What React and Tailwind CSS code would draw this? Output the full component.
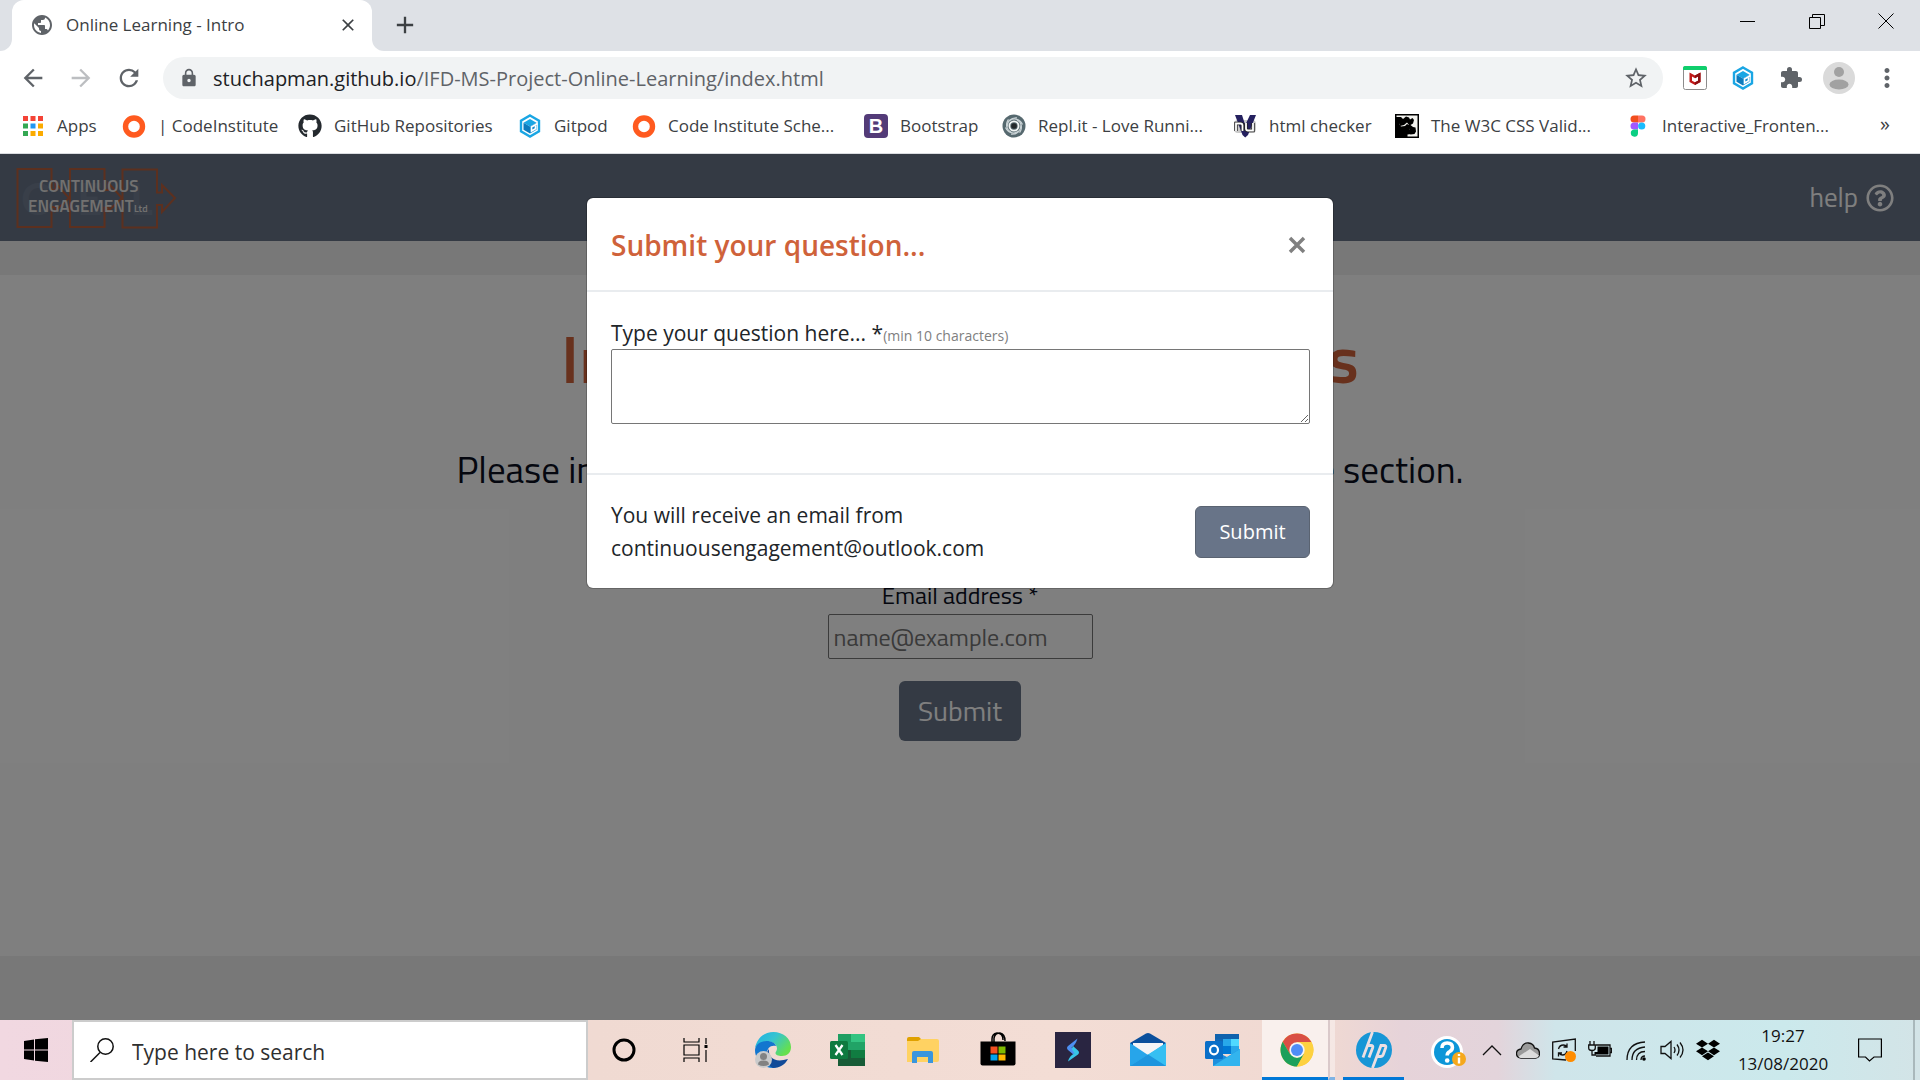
import React from "react";
import {
  MdLock,
  MdExtension,
  MdStarBorder,
  MdMoreVert,
  MdArrowBack,
  MdArrowForward,
  MdRefresh,
  MdPublic,
  MdClose,
  MdAdd,
} from "react-icons/md";
import { FaGithub, FaRegQuestionCircle, FaDropbox } from "react-icons/fa";

/* ---------- browser icons ---------- */

function AppsIcon() {
  const colors = ["#f44336", "#f44336", "#f44336", "#34a853", "#2196f3", "#fbab00", "#34a853", "#fbab00", "#fbab00"];
  return (
    <svg viewBox="0 0 24 24" className="h-6 w-6 shrink-0">
      {colors.map((c, i) => (
        <rect key={i} x={2 + (i % 3) * 7.5} y={2 + Math.floor(i / 3) * 7.5} width="5" height="5" fill={c} />
      ))}
    </svg>
  );
}

function RingIcon() {
  return (
    <svg viewBox="0 0 24 24" className="h-6 w-6 shrink-0">
      <circle cx="12" cy="12.5" r="8.5" fill="none" stroke="#ff5a1f" strokeWidth="5.4" />
    </svg>
  );
}

function GitpodIcon() {
  return (
    <svg viewBox="0 0 24 24" className="h-6 w-6 shrink-0">
      <path d="M12 1.500l9 5.200v10.600l-9 5.200-9-5.200V6.700z" fill="none" stroke="#1aa6e4" strokeWidth="2.400" />
      <path d="M12 5l6.500 3.700L12 12.400 5.500 8.700z" fill="#1aa6e4" />
      <path d="M5.500 8.700L12 12.400v7L5.500 15.700z" fill="#0d7bbd" />
      <path d="M12 12.400l6.500-3.700v7L12 19.400z" fill="#1288cb" />
      <path d="M19.500 9.500L13.500 13v4l4-2.300v-3" fill="none" stroke="#fff" strokeWidth="1.600" />
    </svg>
  );
}

function BootstrapIcon() {
  return (
    <span className="flex h-6 w-6 shrink-0 items-center justify-center rounded bg-[#533b78] font-['Liberation_Sans',sans-serif] text-xl leading-none font-bold text-white">
      B
    </span>
  );
}

function SwirlIcon() {
  return (
    <svg viewBox="0 0 24 24" className="h-6 w-6 shrink-0">
      <circle cx="12" cy="12" r="11.500" fill="#56696f" />
      <g fill="none" stroke="#c9d2d5" strokeWidth="1.200">
        {[0, 60, 120, 180, 240, 300].map((a) => (
          <path key={a} d="M8 6.500c4-3 10-1.500 12.500 4" transform={`rotate(${a} 12 12)`} />
        ))}
      </g>
      <circle cx="12" cy="12" r="4.600" fill="#56696f" stroke="#f2f5f5" strokeWidth="1.800" />
      <circle cx="12" cy="12" r="2.800" fill="#24292b" />
    </svg>
  );
}

function NuIcon() {
  return (
    <svg viewBox="0 0 24 24" className="h-6 w-6 shrink-0">
      <rect x="1" y="6" width="22" height="13" rx="4" fill="#777" opacity="0.4" />
      <path d="M2 1h7l3.200 10L17 1h6l-8 20-2.800 2.500L9.500 21z" fill="#25215f" />
      <path d="M3 17V9.500h4.500q2 0 2 2V17M13 9v5.500q0 2 2 2h5V9" fill="none" stroke="#222" strokeWidth="3.400" />
      <path d="M3 17V9.500h4.500q2 0 2 2V17M13 9v5.500q0 2 2 2h5V9" fill="none" stroke="#fff" strokeWidth="1.800" />
    </svg>
  );
}

function W3cIcon() {
  return (
    <svg viewBox="0 0 24 24" className="h-6 w-6 shrink-0">
      <rect width="24" height="24" fill="#000" />
      <path d="M1.500 1.500h21v21H12.500v-2l4-.5V16l-2.500-1 1-3.500-3-1.500-2 2-4 .5-1.500-2 1-3.500L1.500 6z" fill="#f3f3ef" />
      <path d="M1 3h5l2 2 3-2.500 3 1 1 2 2.500-1.500 1.500 2-1 3.500-2.500 1.500 2.500 2 2.500.5.500 4-1.500 2.500-4 .500-1.500-2 1.500-2-2.500-3 1-2.500-2-2.500-3 2.500-4 1-1-3.500-3-.5z" fill="#000" />
    </svg>
  );
}

function FigmaIcon() {
  return (
    <svg viewBox="0 0 24 24" className="h-6 w-6 shrink-0">
      <path d="M8 1.500h4v7H8a3.500 3.500 0 010-7z" fill="#f24e1e" />
      <path d="M12 1.500h4a3.500 3.500 0 010 7h-4z" fill="#ff7262" />
      <path d="M8 8.500h4v7H8a3.500 3.500 0 010-7z" fill="#a259ff" />
      <circle cx="15.700" cy="12" r="3.600" fill="#1abcfe" />
      <path d="M8 15.500h4V19a3.600 3.600 0 11-4-3.500z" fill="#0acf83" />
    </svg>
  );
}

function McAfeeIcon() {
  return (
    <svg viewBox="0 0 24 24" className="h-6 w-6">
      <rect x=".5" y=".5" width="23" height="23" rx="2" fill="#fff" stroke="#8c8c8c" />
      <path d="M0 4V2q0-2 2-2h20q2 0 2 2v2z" fill="#0fce6c" />
      <path d="M6.500 6.500l5.500 3 5.500-3V16L12 19l-5.500-3zM9 10.500v4.200l3 1.600 3-1.600v-4.200L12 12.300z" fill="#c01818" fillRule="evenodd" />
      <path d="M12 9.500l5.500-3V16L12 19v-2.700l3-1.600v-4.200l-3 1.800z" fill="#8c0f12" />
    </svg>
  );
}

const bookmarks = [
  { label: "Apps", icon: <AppsIcon />, width: "w-[101px]" },
  { label: "| CodeInstitute", icon: <RingIcon />, width: "w-[176px]" },
  { label: "GitHub Repositories", icon: <FaGithub className="h-6 w-6 shrink-0 text-[#24292e]" />, width: "w-[220px]" },
  { label: "Gitpod", icon: <GitpodIcon />, width: "w-[114px]" },
  { label: "Code Institute Sche...", icon: <RingIcon />, width: "w-[232px]" },
  { label: "Bootstrap", icon: <BootstrapIcon />, width: "w-[138px]" },
  { label: "Repl.it - Love Runni...", icon: <SwirlIcon />, width: "w-[231px]" },
  { label: "html checker", icon: <NuIcon />, width: "w-[162px]" },
  { label: "The W3C CSS Valid...", icon: <W3cIcon />, width: "w-[231px]" },
  { label: "Interactive_Fronten...", icon: <FigmaIcon />, width: "w-[220px]" },
];

function Browser() {
  return (
    <header className="border-b border-[#dadce0] bg-white text-[#3c4043]">
      <div className="flex h-[51px] bg-[#dee1e6]">
        <div className="w-3 bg-white">
          <div className="h-full rounded-br-xl bg-[#dee1e6]" />
        </div>
        <div className="flex w-[360px] items-center rounded-t-xl bg-white pr-3 pb-0.5 pl-[18px]">
          <MdPublic className="h-6 w-6 text-[#5f6368]" />
          <span className="ml-3 flex-1 text-[17px]">Online Learning - Intro</span>
          <button aria-label="Close tab">
            <MdClose className="h-5 w-6" />
          </button>
        </div>
        <div className="w-3 bg-white">
          <div className="h-full rounded-bl-xl bg-[#dee1e6]" />
        </div>
        <button aria-label="New tab" className="ml-[7px] pb-0.5">
          <MdAdd className="h-7 w-7" />
        </button>
        <div className="ml-auto flex h-[42px] items-center text-black">
          <button aria-label="Minimise" className="flex w-[69px] justify-center">
            <svg viewBox="0 0 16 16" className="h-4 w-4"><path d="M0 8.500h15" stroke="currentColor" /></svg>
          </button>
          <button aria-label="Restore" className="flex w-[69px] justify-center">
            <svg viewBox="0 0 16 16" className="h-4 w-4" fill="none" stroke="currentColor">
              <path d="M.5 4.500h11v11H.5zM3.500 4.500v-3h12v11h-4" />
            </svg>
          </button>
          <button aria-label="Close" className="flex w-[69px] justify-center">
            <svg viewBox="0 0 16 16" className="h-4 w-4"><path d="M.5.5l15 15M15.500.5l-15 15" stroke="currentColor" /></svg>
          </button>
        </div>
      </div>

      <div className="flex h-[54px] items-center pr-[18px] pl-[19px] text-[#5f6368]">
        <button aria-label="Back"><MdArrowBack className="h-7 w-7" /></button>
        <button aria-label="Forward" className="ml-5"><MdArrowForward className="h-7 w-7 text-[#bcbec1]" /></button>
        <button aria-label="Reload" className="ml-5"><MdRefresh className="h-7 w-7" /></button>
        <div className="ml-5 flex h-[42px] flex-1 items-center rounded-full bg-[#f1f3f4] pr-[14px] pl-4">
          <MdLock className="h-5 w-5" />
          <span className="ml-[14px] flex-1 pt-0.5 text-xl">
            <span className="text-[#202124]">stuchapman.github.io</span>/IFD-MS-Project-Online-Learning/index.html
          </span>
          <button aria-label="Bookmark this page"><MdStarBorder className="h-[26px] w-[26px]" /></button>
        </div>
        <div className="ml-5 flex items-center gap-6">
          <McAfeeIcon />
          <GitpodIcon />
          <MdExtension className="h-6 w-6" />
        </div>
        <svg viewBox="0 0 32 32" className="ml-5 h-8 w-8">
          <circle cx="16" cy="16" r="16" fill="#dadada" />
          <circle cx="16" cy="10" r="5" fill="#a1a1a1" />
          <ellipse cx="16" cy="22.500" rx="9.500" ry="5" fill="#a1a1a1" />
        </svg>
        <button aria-label="Menu" className="ml-[17px]"><MdMoreVert className="h-[30px] w-[30px]" /></button>
      </div>

      <nav className="flex h-12 items-start pt-[9px] pl-[21px] text-[17px] leading-6">
        {bookmarks.map((b) => (
          <a key={b.label} href="#" className={`flex shrink-0 items-center gap-3 whitespace-nowrap ${b.width}`}>
            {b.icon}
            {b.label}
          </a>
        ))}
        <button aria-label="More bookmarks" className="mr-[30px] ml-auto text-xl leading-5">»</button>
      </nav>
    </header>
  );
}

/* ---------- web page ---------- */

function SiteLogo() {
  return (
    <svg viewBox="0 0 200 86" className="h-[86px] w-[200px]" role="img" aria-label="Continuous Engagement Ltd">
      <g fill="#727e92" fontFamily="Lato, sans-serif" fontSize="44" fontWeight="700">
        <text x="21" y="60">C</text>
        <text x="77" y="60">E</text>
        <text x="130" y="60">L</text>
      </g>
      <g fill="none" stroke="#b8603f" strokeWidth="2">
        <path d="M51.500 35V14H17.500v58h34V52M51.500 35h4V28L69 43 55.500 56v-4h-4" />
        <path d="M104.500 35V14H70v58h34.500V52M104.500 35h4V28L122 43l-13.500 13v-4h-4" />
        <path d="M157 37.500V14.500h-34.500V72.500H157V50h5v7l13-14-13-13v7.500z" />
      </g>
      <g fill="#e4e2e0" fontFamily="'Titillium Web', 'Open Sans', sans-serif" fontWeight="600">
        <text x="39" y="37" fontSize="17">CONTINUOUS</text>
        <text x="28" y="57" fontSize="17">ENGAGEMENT</text>
        <text x="134" y="57" fontSize="10">Ltd</text>
      </g>
    </svg>
  );
}

function Page() {
  return (
    <div className="flex flex-1 flex-col bg-[#f0f0f0] font-['Titillium_Web','Open_Sans',sans-serif]">
      <div className="flex h-[87px] items-center justify-between bg-[#687488] pr-[26px]">
        <SiteLogo />
        <a href="#" className="flex items-center gap-2 text-[27px] text-white">
          help <FaRegQuestionCircle className="h-7 w-7" />
        </a>
      </div>
      <section className="mt-[34px] mb-16 flex flex-1 flex-col items-center bg-white pt-[43px] text-[#0a0f1e]">
        <h1 className="text-[67px] leading-[80px] font-semibold whitespace-nowrap text-[#d0623a]">Introduction to the Modules</h1>
        <p className="mt-[43px] text-[37px] leading-[56px] whitespace-nowrap">Please input your name and an email address to take the section.</p>
        <form className="mt-20 flex flex-col items-center" onSubmit={(e) => e.preventDefault()}>
          <label htmlFor="email" className="mb-px text-2xl leading-9">Email address *</label>
          <input
            id="email"
            type="email"
            placeholder="name@example.com"
            className="h-[45px] w-[265px] rounded-xs border border-[#767676] px-[5px] text-2xl placeholder:text-[#757575]"
          />
          <button className="mt-[22px] h-[60px] rounded-md bg-[#687488] px-[19px] text-[28px] leading-none text-white">Submit</button>
        </form>
      </section>
    </div>
  );
}

function QuestionModal() {
  return (
    <div className="absolute inset-0 flex items-start justify-center bg-black/50 pt-[43px]">
      <div role="dialog" aria-labelledby="dialog-title" className="w-full max-w-[748px] rounded-[7px] border border-black/20 bg-white bg-clip-padding text-[21px] text-[#212529]">
        <div className="flex h-[94px] items-center justify-between border-b-2 border-[#e9ecef] pt-0.5 pr-6 pl-6">
          <h2 id="dialog-title" className="text-[28px] font-semibold text-[#cf623a]">Submit your question...</h2>
          <button aria-label="Close" className="text-[#808080]">
            <svg viewBox="0 0 24 24" className="h-6 w-6"><path d="M5 5l14 14M19 5L5 19" stroke="currentColor" strokeWidth="3.500" /></svg>
          </button>
        </div>
        <div className="border-b-2 border-[#e9ecef] pt-[25px] pr-[23px] pb-[49px] pl-6">
          <label htmlFor="question" className="block leading-8">
            Type your question here... *<span className="text-sm text-[#808080]">(min 10 characters)</span>
          </label>
          <textarea id="question" className="block h-[75px] w-full rounded-xs border border-[#767676]" />
        </div>
        <div className="flex items-center justify-between pt-6 pr-[23px] pb-[23px] pl-6">
          <p className="leading-[33px]">
            You will receive an email from
            <br />
            continuousengagement@outlook.com
          </p>
          <button className="h-[52px] w-[115px] rounded-md border border-[#5a6371] bg-[#687488] text-xl text-white">Submit</button>
        </div>
      </div>
    </div>
  );
}

/* ---------- taskbar ---------- */

function StartIcon() {
  return (
    <svg viewBox="0 0 24 24" className="h-6 w-6">
      <path d="M0 3l10-1.500v10H0zM11 1.300L24 0v11.500H11zM0 12.500h10v10L0 21zM11 12.500h13V24l-13-1.300z" fill="#000" />
    </svg>
  );
}

function TaskViewIcon() {
  return (
    <svg viewBox="0 0 26 24" className="h-6 w-[26px]" fill="none" stroke="#000" strokeWidth="1.200">
      <path d="M1 0v4h15V0M1 7h15v10H1zM1 24v-4h15v4M23 0v6M23 12v12" />
      <path d="M21.500 7h3v3h-3z" fill="#000" stroke="none" />
    </svg>
  );
}

function EdgeIcon() {
  return (
    <svg viewBox="0 0 36 36" className="h-9 w-9">
      <defs>
        <linearGradient id="edgeTop" x1="0" y1="0" x2="1" y2="0.600">
          <stop offset="0" stopColor="#1fb0e6" />
          <stop offset="0.500" stopColor="#35c4d0" />
          <stop offset="1" stopColor="#66e04c" />
        </linearGradient>
      </defs>
      <path d="M0 16C2 6 9 0 18.500 0 28 0 36 6.500 36 15c0 6-4 9-9 9-4 0-6.500-1-6.500-3 0-1.500 1.500-2 1.500-4.500 0-4-4-7-9-7C7 9.500 2.500 12 0 16z" fill="url(#edgeTop)" />
      <path d="M0 18C.5 12 6 9 11.500 9c5.500 0 9 2.500 9.500 5-5-1.500-9 2-9 7 0 8 8 12 15 10-4 4-7 5-9 5C8 36 0 28 0 18z" fill="#1276cf" />
      <path d="M14 17c-1 9 6 14 19 10-3 6-9 9-15 9-7-3-9-13-4-19z" fill="#114a98" />
      <circle cx="8.500" cy="27.500" r="8.500" fill="#c9cacb" />
      <circle cx="8.500" cy="24.500" r="3.500" fill="#828282" />
      <path d="M3 32.500q0-4 5.500-4t5.500 4q-5.500 3-11 0z" fill="#828282" />
    </svg>
  );
}

function ExcelIcon() {
  return (
    <svg viewBox="0 0 36 36" className="h-9 w-9">
      <path d="M8 2h27v32H8z" fill="#21a366" />
      <path d="M8 2h14v8H8z" fill="#1f9e62" />
      <path d="M21 2h14v8H21z" fill="#33c481" />
      <path d="M8 18h27v8H8z" fill="#107c41" />
      <path d="M8 26h27v8H8z" fill="#185c37" />
      <path d="M8 18h13v8H8z" fill="#185c37" />
      <rect x="0" y="9" width="18" height="18" rx="1.500" fill="#0f7a3f" />
      <path d="M5.500 13l7 10M12.500 13l-7 10" stroke="#fff" strokeWidth="2.300" />
    </svg>
  );
}

function FolderIcon() {
  return (
    <svg viewBox="0 0 36 36" className="h-9 w-9">
      <path d="M2 7q0-2 2-2h10l4 4H2z" fill="#e0a100" />
      <path d="M2 9h11l3-2h16q2 0 2 2v19q0 2-2 2H2z" fill="#ffd262" />
      <path d="M7 31V21q0-2 2-2h17q2 0 2 2v10h-5v-6H12v6z" fill="#3a96dd" />
    </svg>
  );
}

function StoreIcon() {
  return (
    <svg viewBox="0 0 36 36" className="h-9 w-9">
      <path d="M12 10V7q0-5 5-6 6 0 6 7M14 10V6q1-5 6-5 5 1 5 8" fill="none" stroke="#000" strokeWidth="1.500" />
      <path d="M.5 9.500h35v22q0 2-2 2h-31q-2 0-2-2z" fill="#000" />
      <path d="M10.500 14.500h7v7h-7z" fill="#f25022" />
      <path d="M18.500 14.500h7v7h-7z" fill="#7fba00" />
      <path d="M10.500 22.500h7v6h-7z" fill="#00a4ef" />
      <path d="M18.500 22.500h7v6h-7z" fill="#ffb900" />
    </svg>
  );
}

function BoltIcon() {
  return (
    <svg viewBox="0 0 36 36" className="h-9 w-9">
      <path d="M0 0h36v36H0z" fill="#292541" />
      <path d="M22.500 6.500L13 14q-2 2 0 4l6 5q3-3 0-5l-2.500-2.500q4-2.500 6-9z" fill="#4d8ff2" />
      <path d="M13 29.500l10-7q2-2 0-4l-5-4.500q-2 3 0 5l1.500 2.500q-5 2-6.500 8z" fill="#38c6e8" />
    </svg>
  );
}

function MailIcon() {
  return (
    <svg viewBox="0 0 36 36" className="h-9 w-9">
      <path d="M0 11L16 1.500q2-1 4 0L36 11v6H0z" fill="#0a4f9c" />
      <path d="M3 11h30v12H3z" fill="#f4f4f6" />
      <path d="M0 11l18 12L36 11v23H0z" fill="#27a5ea" />
      <path d="M36 11L18 22.500 0 34h36z" fill="#36bff2" />
      <path d="M18 22.500L36 34H0z" fill="#1e95de" />
    </svg>
  );
}

function OutlookIcon() {
  return (
    <svg viewBox="0 0 36 36" className="h-9 w-9">
      <path d="M10 2h24v18H10z" fill="#0f62ad" />
      <path d="M10 7h8v8h-8z" fill="#1066b5" />
      <path d="M18 7h8v8h-8z" fill="#28a8ea" />
      <path d="M26 7h8v8h-8z" fill="#50d9ff" />
      <path d="M18 14h8v8h-8z" fill="#0078d4" />
      <path d="M26 14h8v8h-8z" fill="#28a8ea" />
      <path d="M8 18l14 7 13-8v17H8z" fill="#1d8fdd" />
      <path d="M35 17L8 34h27z" fill="#32b4ee" />
      <rect x="0" y="9" width="18" height="18" rx="1.500" fill="#0a6fc8" />
      <ellipse cx="9" cy="18" rx="4" ry="4.300" fill="none" stroke="#fff" strokeWidth="2.200" />
    </svg>
  );
}

function ChromeIcon() {
  return (
    <svg viewBox="0 0 36 36" className="h-9 w-9">
      <circle cx="18" cy="18" r="16.500" fill="#fcc934" />
      <path d="M18 10h14.400A16.500 16.500 0 003.700 9.800L11 22z" fill="#d94f44" />
      <path d="M3.700 9.800A16.500 16.500 0 0018 34.500L25 22l-7 4-7-4z" fill="#1da05b" />
      <path d="M25 22l-7 12.500A16.500 16.500 0 0032.400 10H18z" fill="#fdd140" />
      <circle cx="18" cy="18" r="7.700" fill="#f4f4f4" />
      <circle cx="18" cy="18" r="6" fill="#4e8df6" />
    </svg>
  );
}

function HpIcon() {
  return (
    <svg viewBox="0 0 36 36" className="h-9 w-9">
      <circle cx="18" cy="18" r="18" fill="#1796d6" />
      <g fill="none" stroke="#ecdfe2" strokeWidth="2.800">
        <path d="M16.500 0L7 25.500M11.500 13.500h3.500q2.500 0 1.600 2.500L13 25.500" />
        <path d="M16.500 36l8.500-22.500h3q2.500 0 1.600 2.500l-2.300 6.500q-.8 2-3 2h-3" />
      </g>
    </svg>
  );
}

function HelpTrayIcon() {
  return (
    <svg viewBox="0 0 36 36" className="h-9 w-9">
      <circle cx="16" cy="18" r="16" fill="#fff" />
      <circle cx="16" cy="18" r="13" fill="#0d96d8" />
      <path d="M11 14q0-5 5.200-5t5.200 4.500q0 2.500-2.700 4-2.500 1.300-2.500 4" fill="none" stroke="#fff" strokeWidth="3.600" />
      <circle cx="16.200" cy="26.500" r="2.300" fill="#fff" />
      <circle cx="28" cy="25" r="7" fill="#f5a81c" />
      <path d="M28 23.500v6M28 20v2" stroke="#fff" strokeWidth="2.400" />
    </svg>
  );
}

const dockApps = [
  { name: "Microsoft Edge", icon: <EdgeIcon /> },
  { name: "Excel", icon: <ExcelIcon /> },
  { name: "File Explorer", icon: <FolderIcon /> },
  { name: "Microsoft Store", icon: <StoreIcon /> },
  { name: "Switch", icon: <BoltIcon /> },
  { name: "Mail", icon: <MailIcon /> },
  { name: "Outlook", icon: <OutlookIcon /> },
];

const trayIcons = [
  {
    name: "Show hidden icons",
    icon: <path d="M3 17l9-9 9 9" />,
  },
  {
    name: "OneDrive",
    icon: (
      <>
        <path d="M5 20q-4.500-.5-4.500-4.500T5 11q2-6.500 7.500-6 5 .5 6 5 5 .5 5 5.500 0 4-4 4.500z" fill="#9a9a9a" />
        <path d="M2.500 18.500L14 11l9 6.500q-1 2.500-3.500 2.500H5q-1.500 0-2.500-1.500z" fill="#dcdcdc" stroke="none" />
      </>
    ),
  },
  {
    name: "Updates",
    icon: (
      <>
        <path d="M14 22L.7 21V4L23.300 1v12" />
        <path d="M6.500 11q1-4 5-4 2 0 3.500 2M15 5.500V9h-3.500M15 13q-1 4-4.500 4-2 0-3.500-2M6.500 18.500V15H10" />
        <circle cx="18.500" cy="18.500" r="5.500" fill="#ff8c00" stroke="none" />
      </>
    ),
  },
  {
    name: "Battery",
    icon: (
      <>
        <path d="M2 3v4M6 3v4M.7 7h6.600v3q0 2.500-3.300 2.500T.7 10zM4 12.500V17h4M8 7h14v11H8M22 10.500h1.500v4H22" />
        <path d="M9.500 8.500h11v8h-14V14h3z" fill="#000" stroke="none" />
      </>
    ),
  },
  {
    name: "Network",
    icon: (
      <>
        <path d="M3 22Q3 5 21 4M8 22Q8 10 21 9M12.500 22q0-8.500 8.500-8.500M17 22q0-4 4-4" />
        <circle cx="20" cy="21" r="1.800" fill="#000" stroke="none" />
      </>
    ),
  },
  {
    name: "Volume",
    icon: <path d="M1 8.500v7h4l6 5v-17l-6 5zM14 9q2 3 0 6M17 6.500q4 5.500 0 11M20 4.500q6 7.500 0 15" />,
  },
];

function Taskbar() {
  return (
    <footer className="flex h-[60px] items-stretch bg-[linear-gradient(90deg,#f1d8e1_0%,#efd6dc_20%,#f0dad2_31%,#f3ddd5_55%,#f0d9d2_69%,#e6d3d9_73%,#e3d4db_78%,#cfe5ea_81%,#cbe9ec_93%,#d3e4e7_100%)]">
      <button aria-label="Start" className="flex w-[72px] items-center justify-center"><StartIcon /></button>
      <label className="flex w-[516px] items-center border-2 border-[#cccccc] bg-white pl-4">
        <svg viewBox="0 0 24 24" className="h-6 w-6" fill="none" stroke="#111" strokeWidth="1.500">
          <circle cx="15.500" cy="8.500" r="7.700" />
          <path d="M10 14.500L.5 24" />
        </svg>
        <input aria-label="Search" placeholder="Type here to search" className="ml-[18px] min-w-0 flex-1 pt-1.5 text-[21px] outline-none placeholder:text-[#2f2f2f]" />
      </label>
      <button aria-label="Cortana" className="flex w-[72px] items-center justify-center">
        <svg viewBox="0 0 24 24" className="h-6 w-6"><circle cx="12" cy="12" r="10" fill="none" stroke="#000" strokeWidth="3" /></svg>
      </button>
      <button aria-label="Task view" className="flex w-[75px] items-center justify-center pr-1"><TaskViewIcon /></button>
      {dockApps.map((a) => (
        <button key={a.name} aria-label={a.name} className="flex w-[75px] items-center justify-center">{a.icon}</button>
      ))}
      <button aria-label="Google Chrome" className="ml-0.5 flex w-[66px] items-center justify-center border-b-3 border-[#0078d7] bg-white/60 pt-[3px] pl-1">
        <ChromeIcon />
      </button>
      <span className="w-[7px] border-b-3 border-l-2 border-b-[#7fb3e4] border-l-[#dac9ca] bg-white/40" />
      <button aria-label="HP" className="mx-2 flex w-[61px] items-center justify-center border-b-3 border-[#0078d7] pt-[3px]"><HpIcon /></button>

      <div className="ml-auto flex items-center">
        <span className="mt-1 flex w-[50px] justify-center"><HelpTrayIcon /></span>
        {trayIcons.map((t) => (
          <button key={t.name} aria-label={t.name} className="flex w-9 justify-center">
            <svg viewBox="0 0 24 24" className="h-6 w-6" fill="none" stroke="#111" strokeWidth="1.300">{t.icon}</svg>
          </button>
        ))}
        <button aria-label="Dropbox" className="flex w-9 justify-center"><FaDropbox className="h-6 w-6 text-black" /></button>
        <div className="ml-2.5 w-[94px] text-center text-[17px] leading-7 text-[#111]">
          <div>19:27</div>
          <div>13/08/2020</div>
        </div>
        <button aria-label="Notifications" className="mr-1 flex w-[79px] justify-center">
          <svg viewBox="0 0 24 24" className="h-6 w-6" fill="none" stroke="#000" strokeWidth="1.200">
            <path d="M.6 1h22.800v18H16l-4.500 4-4-4H.6z" />
          </svg>
        </button>
        <span className="h-[60px] w-[7px] border-l-2 border-[#a9b8bb]" />
      </div>
    </footer>
  );
}

export default function App() {
  return (
    <div className="flex min-h-screen flex-col font-['Segoe_UI','Open_Sans',sans-serif]">
      <Browser />
      <main className="relative flex flex-1 flex-col">
        <Page />
        <QuestionModal />
      </main>
      <Taskbar />
    </div>
  );
}
